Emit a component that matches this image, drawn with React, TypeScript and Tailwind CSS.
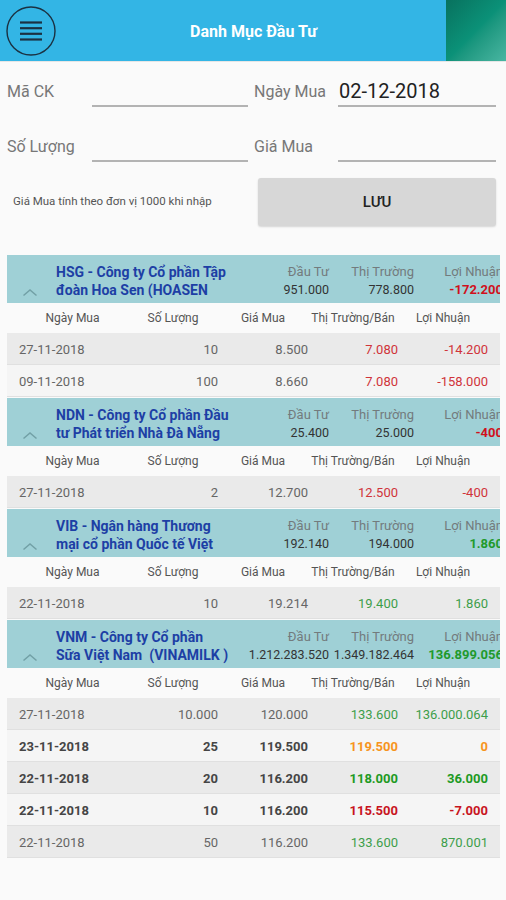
import React from "react";

type Row = {
  date: string;
  qty: string;
  price: string;
  market: string;
  profit: string;
  color: string;
  bold?: boolean;
};

type Group = {
  title: string[];
  dauTu: string;
  thiTruong: string;
  loiNhuan: string;
  lnColor: string;
  rows: Row[];
};

const groups: Group[] = [
  {
    title: ["HSG - Công ty Cổ phần Tập", "đoàn Hoa Sen (HOASEN"],
    dauTu: "951.000",
    thiTruong: "778.800",
    loiNhuan: "-172.200",
    lnColor: "text-[#d0101c]",
    rows: [
      { date: "27-11-2018", qty: "10", price: "8.500", market: "7.080", profit: "-14.200", color: "text-[#d0343a]" },
      { date: "09-11-2018", qty: "100", price: "8.660", market: "7.080", profit: "-158.000", color: "text-[#d0343a]" },
    ],
  },
  {
    title: ["NDN - Công ty Cổ phần Đầu", "tư Phát triển Nhà Đà Nẵng"],
    dauTu: "25.400",
    thiTruong: "25.000",
    loiNhuan: "-400",
    lnColor: "text-[#d0101c]",
    rows: [{ date: "27-11-2018", qty: "2", price: "12.700", market: "12.500", profit: "-400", color: "text-[#d0343a]" }],
  },
  {
    title: ["VIB - Ngân hàng Thương", "mại cổ phần Quốc tế Việt"],
    dauTu: "192.140",
    thiTruong: "194.000",
    loiNhuan: "1.860",
    lnColor: "text-[#1f9a2c]",
    rows: [{ date: "22-11-2018", qty: "10", price: "19.214", market: "19.400", profit: "1.860", color: "text-[#3d9e4a]" }],
  },
  {
    title: ["VNM - Công ty Cổ phần", "Sữa Việt Nam  (VINAMILK )"],
    dauTu: "1.212.283.520",
    thiTruong: "1.349.182.464",
    loiNhuan: "136.899.056",
    lnColor: "text-[#1f9a2c]",
    rows: [
      { date: "27-11-2018", qty: "10.000", price: "120.000", market: "133.600", profit: "136.000.064", color: "text-[#3d9e4a]" },
      { date: "23-11-2018", qty: "25", price: "119.500", market: "119.500", profit: "0", color: "text-[#f7941d]", bold: true },
      { date: "22-11-2018", qty: "20", price: "116.200", market: "118.000", profit: "36.000", color: "text-[#1e9a24]", bold: true },
      { date: "22-11-2018", qty: "10", price: "116.200", market: "115.500", profit: "-7.000", color: "text-[#c8141e]", bold: true },
      { date: "22-11-2018", qty: "50", price: "116.200", market: "133.600", profit: "870.001", color: "text-[#3d9e4a]" },
    ],
  },
];

function Hamburger() {
  return (
    <svg width="62" height="61" viewBox="0 0 62 61">
      <circle cx="31" cy="31" r="24" fill="none" stroke="#1b3142" strokeWidth="1.4" />
      <line x1="20" y1="22.5" x2="42" y2="22.5" stroke="#1b3142" strokeWidth="2.2" />
      <line x1="20" y1="28.2" x2="42" y2="28.2" stroke="#1b3142" strokeWidth="2.2" />
      <line x1="20" y1="33.8" x2="42" y2="33.8" stroke="#1b3142" strokeWidth="2.2" />
      <line x1="20" y1="39.5" x2="42" y2="39.5" stroke="#1b3142" strokeWidth="2.2" />
    </svg>
  );
}

function GroupBlock({ g }: { g: Group }) {
  return (
    <div className="mb-[1px]">
      {/* group header */}
      <div className="flex h-[48px] overflow-hidden bg-[#9fd0d6] pt-[3px]">
        <div className="flex w-[49px] shrink-0 items-end pb-[6px] pl-[15px]">
          <svg width="16" height="9" viewBox="0 0 16 9">
            <polyline points="1.5,7.5 8,2 14.5,7.5" fill="none" stroke="#72a0a6" strokeWidth="1.5" />
          </svg>
        </div>
        <div className="flex w-[188px] shrink-0 flex-col justify-center text-[14px] leading-[18px] font-bold text-[#1d3fa5] whitespace-pre">
          {g.title.map((t) => (
            <div key={t}>{t}</div>
          ))}
        </div>
        <div className="flex w-[85px] shrink-0 flex-col justify-center text-right leading-[18px] whitespace-nowrap">
          <div className="text-[13px] text-[#737b7d]">Đầu Tư</div>
          <div className="text-[12.5px] text-[#333]">{g.dauTu}</div>
        </div>
        <div className="flex w-[85px] shrink-0 flex-col justify-center text-right leading-[18px] whitespace-nowrap">
          <div className="text-[13px] text-[#737b7d]">Thị Trường</div>
          <div className="text-[12.5px] text-[#333]">{g.thiTruong}</div>
        </div>
        <div className="flex w-[89px] shrink-0 flex-col justify-center text-right leading-[18px] whitespace-nowrap">
          <div className="text-[13px] text-[#737b7d]">Lợi Nhuận</div>
          <div className={`text-[13px] font-bold ${g.lnColor}`}>{g.loiNhuan}</div>
        </div>
      </div>

      {/* column titles */}
      <div className="flex h-[30px] items-center bg-[#fafafa] text-[12px] text-[#555]">
        <div className="flex w-[131px] justify-center">Ngày Mua</div>
        <div className="flex w-[90px] justify-center pr-[20px]">Số Lượng</div>
        <div className="flex w-[90px] justify-center pr-[20px]">Giá Mua</div>
        <div className="flex w-[90px] justify-center pr-[20px] whitespace-nowrap">Thị Trường/Bán</div>
        <div className="flex w-[90px] justify-center pr-[20px]">Lợi Nhuận</div>
      </div>

      {g.rows.map((r, i) => (
        <div
          key={i}
          className={`flex h-[32px] items-center border-b border-[#e0e0e0] pt-[2px] text-[13px] ${
            i % 2 === 0 ? "bg-[#eaeaea]" : "bg-[#f5f5f5]"
          } ${r.bold ? "font-bold text-[#454545]" : "text-[#666]"}`}
        >
          <div className="w-[131px] pl-[12px]">{r.date}</div>
          <div className="w-[90px] pr-[10px] text-right">{r.qty}</div>
          <div className="w-[90px] pr-[10px] text-right">{r.price}</div>
          <div className={`w-[90px] pr-[10px] text-right ${r.color}`}>{r.market}</div>
          <div className={`w-[90px] pr-[10px] text-right whitespace-nowrap ${r.color}`}>{r.profit}</div>
        </div>
      ))}
    </div>
  );
}

export default function App() {
  return (
    <div className="min-h-[900px] w-[506px] bg-[#fafafa] font-['Roboto','Noto_Sans',sans-serif]">
      {/* top bar */}
      <div className="flex h-[61px] bg-[#33b5e5]">
        <div className="w-[61px] shrink-0">
          <Hamburger />
        </div>
        <div className="flex flex-1 items-center justify-center pt-[2px] text-[16px] font-bold text-white">
          Danh Mục Đầu Tư
        </div>
        <div className="w-[60px] shrink-0 bg-gradient-to-br from-[#08725e] via-[#0b9178] to-[#48b6a2]" />
      </div>
      <div className="h-[1px] bg-[#e6e6e6]" />

      {/* form */}
      <div className="pl-[7px] pr-[10px] pt-[14px]">
        <div className="flex h-[31px]">
          <div className="flex w-[85px] items-center text-[16px] text-[#777]">Mã CK</div>
          <div className="w-[156px] border-b-2 border-[#b3b3b3]" />
          <div className="ml-[6px] flex w-[84px] items-center text-[16px] text-[#777] whitespace-nowrap">Ngày Mua</div>
          <div className="flex flex-1 items-center border-b-2 border-[#b3b3b3] pl-[1px] text-[20px] text-[#222]">
            02-12-2018
          </div>
        </div>
        <div className="mt-[24px] flex h-[31px]">
          <div className="flex w-[85px] items-center text-[16px] text-[#777]">Số Lượng</div>
          <div className="w-[156px] border-b-2 border-[#b3b3b3]" />
          <div className="ml-[6px] flex w-[84px] items-center text-[16px] text-[#777]">Giá Mua</div>
          <div className="flex-1 border-b-2 border-[#b3b3b3]" />
        </div>
        <div className="mt-[16px] flex h-[48px]">
          <div className="flex w-[251px] items-center pl-[6px] text-[11.5px] text-[#555] whitespace-nowrap">
            Giá Mua tính theo đơn vị 1000 khi nhập
          </div>
          <button className="flex flex-1 items-center justify-center rounded-[3px] bg-[#d7d7d7] text-[15px] font-medium text-[#222] shadow-[0_1px_2px_rgba(0,0,0,0.15)]">
            LƯU
          </button>
        </div>
      </div>

      {/* portfolio */}
      <div className="mt-[29px] pl-[7px] pr-[6px]">
        {groups.map((g) => (
          <GroupBlock key={g.title[0]} g={g} />
        ))}
      </div>
    </div>
  );
}
